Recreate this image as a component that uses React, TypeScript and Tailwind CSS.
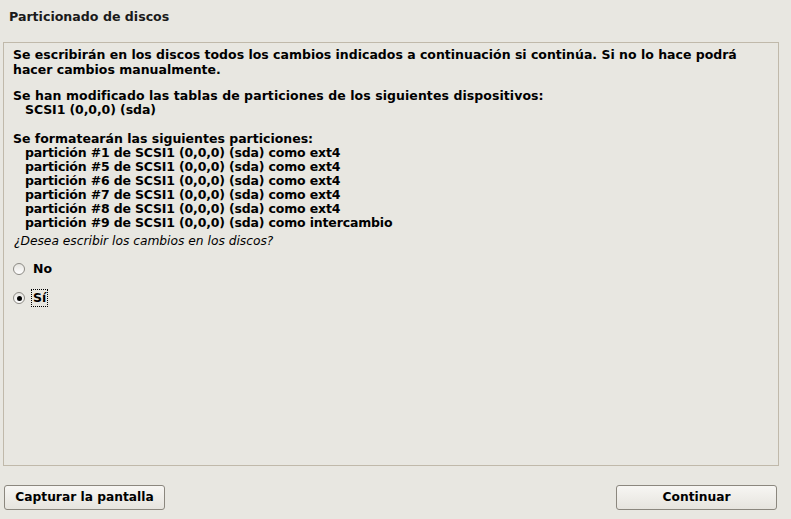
import React from "react";

const parts = [
  "partición #1 de SCSI1 (0,0,0) (sda) como ext4",
  "partición #5 de SCSI1 (0,0,0) (sda) como ext4",
  "partición #6 de SCSI1 (0,0,0) (sda) como ext4",
  "partición #7 de SCSI1 (0,0,0) (sda) como ext4",
  "partición #8 de SCSI1 (0,0,0) (sda) como ext4",
  "partición #9 de SCSI1 (0,0,0) (sda) como intercambio",
];

function Radio({ checked }: { checked?: boolean }) {
  return (
    <span className="w-[12px] h-[12px] rounded-full border border-[#8c8a84] bg-gradient-to-b from-[#e6e5e0] to-[#ffffff] flex items-center justify-center shrink-0">
      {checked && <span className="w-[5px] h-[5px] rounded-full bg-black" />}
    </span>
  );
}

export default function App() {
  return (
    <div
      className="w-[791px] h-[519px] bg-[#e8e7e1] text-black flex flex-col overflow-hidden"
      style={{ fontFamily: '"DejaVu Sans", sans-serif' }}
    >
      <div className="h-[42px] pl-[9px] pt-[9px] text-[12.6px] leading-[16px] font-semibold text-[#1a1a1a]">
        Particionado de discos
      </div>
      <div className="ml-[3px] w-[776px] h-[424px] border border-[#c0b9aa] pl-[9px] pt-[4px] text-[12.5px] font-bold leading-[14px]">
        <div className="leading-[15px]">
          <div>Se escribirán en los discos todos los cambios indicados a continuación si continúa. Si no lo hace podrá</div>
          <div>hacer cambios manualmente.</div>
        </div>
        <div className="mt-[12px]">
          <div className="tracking-[0.07px]">Se han modificado las tablas de particiones de los siguientes dispositivos:</div>
          <div className="pl-[12px] tracking-[-0.1px]">SCSI1 (0,0,0) (sda)</div>
        </div>
        <div className="mt-[15px]">
          <div>Se formatearán las siguientes particiones:</div>
          {parts.map((p) => (
            <div key={p} className="pl-[12px] tracking-[-0.17px]">{p}</div>
          ))}
        </div>
        <div className="mt-[4px] pl-[1px] italic font-normal text-[12.25px]">¿Desea escribir los cambios en los discos?</div>
        <div className="mt-[14px] flex items-center gap-[7px]">
          <Radio />
          <span className="px-[1px]">No</span>
        </div>
        <div className="mt-[13px] flex items-center gap-[6px]">
          <Radio checked />
          <span className="border border-dotted border-black px-[1px] leading-[16px]">Sí</span>
        </div>
      </div>
      <div className="mt-[19px] flex justify-between pl-[4px] pr-[14px]">
        <button className="w-[161px] h-[25px] rounded-[3px] border border-[#8b877e] bg-gradient-to-b from-[#f7f6f3] to-[#e6e4de] text-[12.25px] font-bold">
          Capturar la pantalla
        </button>
        <button className="w-[161px] h-[25px] rounded-[3px] border border-[#8b877e] bg-gradient-to-b from-[#f7f6f3] to-[#e6e4de] text-[12.25px] font-bold">
          Continuar
        </button>
      </div>
    </div>
  );
}
